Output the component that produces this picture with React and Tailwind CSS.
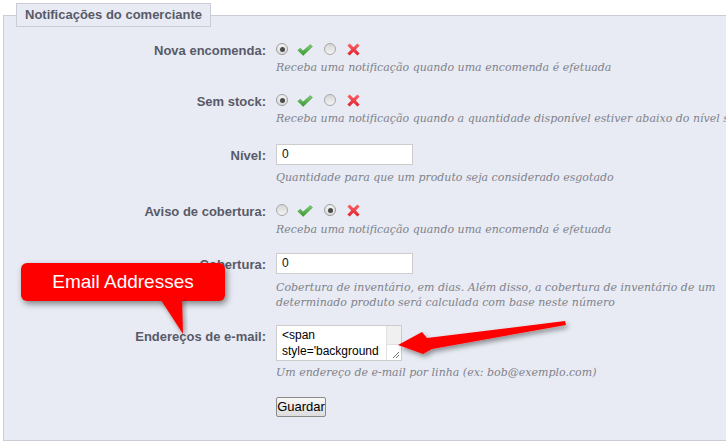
import React from 'react'

const LABEL = 'w-[262px] shrink-0 pt-[4px] text-right text-[13px] leading-[15px] font-bold text-[#585a68]'
const HELP = "font-['DejaVu_Serif',Georgia,serif] italic text-[11px] leading-[15px] text-[#80828c]"

function Radio({ checked }) {
  if (checked) {
    return (
      <span className="flex h-[12px] w-[12px] items-center justify-center rounded-full border border-[#9c9c9c] bg-gradient-to-b from-[#f2f2f2] to-[#dcdcdc]">
        <span className="h-[5px] w-[5px] rounded-full bg-[#4a4a4a]" />
      </span>
    )
  }
  return (
    <span className="h-[12px] w-[12px] rounded-full border border-[#a8a8a8] bg-gradient-to-b from-[#d6d6d6] to-[#f4f4f4]" />
  )
}

function Check() {
  return (
    <svg width="16" height="12" viewBox="0 0 16 12">
      <defs>
        <linearGradient id="gck" x1="0" y1="0" x2="0" y2="1">
          <stop offset="0" stopColor="#7fd071" />
          <stop offset="1" stopColor="#389a33" />
        </linearGradient>
      </defs>
      <path d="M0.8 6.2 L3.4 4.2 L6 7 L13.4 0.6 L15.4 2.6 L6.2 11.4 Z" fill="url(#gck)" stroke="#3c8f36" strokeWidth="0.5" strokeLinejoin="round" />
    </svg>
  )
}

function Cross() {
  return (
    <svg width="13" height="13" viewBox="0 0 13 13">
      <defs>
        <linearGradient id="gx" x1="0" y1="0" x2="0" y2="1">
          <stop offset="0" stopColor="#ff6167" />
          <stop offset="1" stopColor="#e0202a" />
        </linearGradient>
      </defs>
      <path
        d="M2.6 0.4 L6.5 4.2 L10.4 0.4 L12.6 2.6 L8.8 6.5 L12.6 10.4 L10.4 12.6 L6.5 8.8 L2.6 12.6 L0.4 10.4 L4.2 6.5 L0.4 2.6 Z"
        fill="url(#gx)"
      />
    </svg>
  )
}

function YesNo({ yes }) {
  return (
    <div className="flex h-[20px] items-center">
      <Radio checked={yes} />
      <span className="ml-[9px] mt-[1px] flex"><Check /></span>
      <span className="ml-[11px] flex"><Radio checked={!yes} /></span>
      <span className="ml-[11px] mt-[1px] flex"><Cross /></span>
    </div>
  )
}

function TextInput({ value }) {
  return (
    <div className="h-[21px] w-[137px] border border-[#cccccc] bg-white pl-[5px] text-[12px] leading-[19px] text-[#111]">
      {value}
    </div>
  )
}

function Row({ label, className, children }) {
  return (
    <div className={`flex ${className}`}>
      <div className={LABEL}>{label}</div>
      <div className="ml-[10px] min-w-0 flex-1">{children}</div>
    </div>
  )
}

export default function App() {
  return (
    <div className="relative h-[442px] w-[726px] overflow-hidden bg-white font-['Liberation_Sans',Arial,sans-serif]">
      <fieldset className="ml-[3px] mt-[3px] w-[760px] border border-[#cbcdd6] bg-[#e8ebf3] pb-[22px]">
        <legend className="ml-[12px] h-[24px] border border-[#cbcdd6] bg-[#e8ebf3] px-[8px] text-[13px] leading-[22px] font-bold text-[#585a68]">
          Notificações do comerciante
        </legend>

        <Row label="Nova encomenda:" className="mt-[12px]">
          <YesNo yes />
          <p className={`${HELP} mt-[1px]`}>Receba uma notificação quando uma encomenda é efetuada</p>
        </Row>

        <Row label="Sem stock:" className="mt-[15px]">
          <YesNo yes />
          <p className={`${HELP} mt-[1px] whitespace-nowrap`}>
            Receba uma notificação quando a quantidade disponível estiver abaixo do nível selecionado
          </p>
        </Row>

        <Row label="Nível:" className="mt-[18px]">
          <TextInput value="0" />
          <p className={`${HELP} mt-[5px]`}>Quantidade para que um produto seja considerado esgotado</p>
        </Row>

        <Row label="Aviso de cobertura:" className="mt-[15px]">
          <YesNo yes={false} />
          <p className={`${HELP} mt-[2px]`}>Receba uma notificação quando uma encomenda é efetuada</p>
        </Row>

        <Row label="Cobertura:" className="mt-[16px]">
          <TextInput value="0" />
          <p className={`${HELP} mt-[6px]`}>
            Cobertura de inventário, em dias. Além disso, a cobertura de inventário de um
            <br />
            determinado produto será calculada com base neste número
          </p>
        </Row>

        <Row label="Endereços de e-mail:" className="mt-[15px]">
          <div className="flex h-[36px] w-[126px] border border-[#cccccc] bg-white">
            <div className="min-w-0 flex-1 overflow-hidden pl-[5px] pt-[1px] text-[12px] leading-[16px] text-black">
              <div>&lt;span</div>
              <div className="whitespace-nowrap">style='background</div>
            </div>
            <div className="flex w-[15px] flex-col">
              <div className="h-[19px] border-b border-l border-[#e0e0e0] bg-[#f0f0f0]" />
              <div className="flex flex-1 items-end justify-end border-l border-[#e0e0e0] pb-[1px] pr-[1px]">
                <svg width="8" height="8" viewBox="0 0 8 8">
                  <path d="M1 7 L7 1 M4 7 L7 4" stroke="#777" strokeWidth="1" />
                </svg>
              </div>
            </div>
          </div>
          <p className={`${HELP} mt-[4px]`}>Um endereço de e-mail por linha (ex: bob@exemplo.com)</p>
          <button className="mt-[17px] h-[20px] w-[50px] rounded-[2px] border border-[#8a8a8a] bg-gradient-to-b from-[#f7f7f7] to-[#dddddd] p-0 text-[13px] leading-[18px] text-black">
            Guardar
          </button>
        </Row>
      </fieldset>

      {/* annotation overlays */}
      <div className="absolute left-[21px] top-[263px] h-[38px] w-[204px] rounded-[6px] bg-[#ff0000] text-center text-[19px] leading-[38px] text-white shadow-[2px_3px_6px_rgba(0,0,0,0.45)]">
        Email Addresses
      </div>
      <svg className="absolute left-0 top-0" width="726" height="442" viewBox="0 0 726 442" style={{ pointerEvents: 'none' }}>
        <defs>
          <filter id="sh" x="-20%" y="-20%" width="140%" height="160%">
            <feDropShadow dx="2" dy="3" stdDeviation="2.5" floodColor="#000" floodOpacity="0.4" />
          </filter>
        </defs>
        <polygon points="159,297 182,297 183,334" fill="#ff0000" filter="url(#sh)" />
        <rect x="158" y="290" width="26" height="10" fill="#ff0000" />
        <polygon
          points="398,345 422,332 427,338 565,321 566,325 432,349 423,354"
          fill="#ff0000"
          filter="url(#sh)"
        />
      </svg>
    </div>
  )
}
